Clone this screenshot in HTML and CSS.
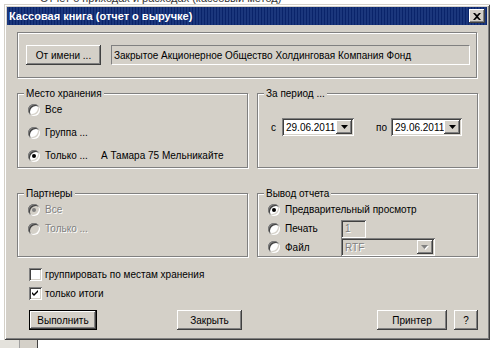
FILE: index.html
```html
<!DOCTYPE html>
<html lang="ru">
<head>
<meta charset="utf-8">
<title>Кассовая книга</title>
<link rel="stylesheet" href="styles.css">
</head>
<body>
<div class="desktop">
  <div class="bg-line"><span class="bg-text">Отчет о приходах и расходах (кассовый метод)</span></div>
  <div class="bg-bottom"><span class="bg-cell-a"></span><span class="bg-cell-b"></span></div>

  <div class="dialog">
    <div class="titlebar">
      <span class="title">Кассовая книга (отчет о выручке)</span>
      <span class="close"><svg width="8" height="7" viewBox="0 0 8 7"><path d="M0 0h2l2 2 2-2h2L5 3.5 8 7H6L4 5 2 7H0l3-3.5z" fill="#000"/></svg></span>
    </div>

    <div class="content">
      <div class="etched top-box">
        <div class="btn btn-from">От имени ...</div>
        <div class="static-field">Закрытое Акционерное Общество Холдинговая Компания Фонд</div>
      </div>

      <div class="row row-2">
        <div class="etched group group-left">
          <span class="group-label">Место хранения</span>
          <div class="list list-storage">
            <div class="opt opt-23"><span class="radio"></span><span>Все</span></div>
            <div class="opt opt-23"><span class="radio"></span><span>Группа ...</span></div>
            <div class="opt opt-23"><span class="radio checked"></span><span class="opt-name">Только ...</span><span>А Тамара 75 Мельникайте</span></div>
          </div>
        </div>
        <div class="etched group group-right">
          <span class="group-label">За период ...</span>
          <div class="period-row">
            <span class="lbl-from">с</span>
            <div class="combo combo-date1"><span class="combo-text">29.06.2011</span><span class="combo-btn"><svg width="7" height="4" viewBox="0 0 7 4"><path d="M0 0h7L3.5 4z" fill="#000"/></svg></span></div>
            <span class="lbl-to">по</span>
            <div class="combo combo-date2"><span class="combo-text">29.06.2011</span><span class="combo-btn"><svg width="7" height="4" viewBox="0 0 7 4"><path d="M0 0h7L3.5 4z" fill="#000"/></svg></span></div>
          </div>
        </div>
      </div>

      <div class="row row-3">
        <div class="etched group group-left">
          <span class="group-label">Партнеры</span>
          <div class="list">
            <div class="opt opt-19 disabled"><span class="radio checked"></span><span>Все</span></div>
            <div class="opt opt-19 disabled"><span class="radio"></span><span>Только ...</span></div>
          </div>
        </div>
        <div class="etched group group-right">
          <span class="group-label">Вывод отчета</span>
          <div class="list">
            <div class="opt opt-19"><span class="radio checked"></span><span>Предварительный просмотр</span></div>
            <div class="opt opt-19"><span class="radio"></span><span class="opt-name">Печать</span><div class="edit-disabled">1</div></div>
            <div class="opt opt-18"><span class="radio"></span><span class="opt-name">Файл</span><div class="combo combo-disabled"><span class="combo-text">RTF</span><span class="combo-btn"><svg width="8" height="5" viewBox="0 0 8 5"><path d="M1 1h7L4.5 5z" fill="#fff"/><path d="M0 0h7L3.5 4z" fill="#808080"/></svg></span></div></div>
          </div>
        </div>
      </div>

      <div class="checks">
        <div class="chk-row"><span class="check"></span><span>группировать по местам хранения</span></div>
        <div class="chk-row"><span class="check"><svg width="7" height="7" viewBox="0 0 7 7"><path d="M0 2L2 4L6 0V2L2 6L0 4Z" fill="#000"/></svg></span><span>только итоги</span></div>
      </div>

      <div class="buttons">
        <div class="btn btn-default btn-run">Выполнить</div>
        <div class="btn btn-close">Закрыть</div>
        <div class="btn btn-printer">Принтер</div>
        <div class="btn btn-help">?</div>
      </div>
    </div>
  </div>
</div>
</body>
</html>
```

FILE: styles.css
```css
* { box-sizing: border-box; }
html, body { margin: 0; padding: 0; }
body {
  width: 494px;
  height: 348px;
  overflow: hidden;
  background: #fff;
  font-family: "Liberation Sans", Arial, sans-serif;
  font-size: 10px;
  color: #000;
}

.desktop {
  position: relative;
  width: 494px;
  height: 348px;
  background: #fff;
  display: flex;
  flex-direction: column;
  justify-content: space-between;
}

.bg-line {
  height: 4px;
  overflow: hidden;
  padding-left: 40px;
}
.bg-text {
  display: block;
  font-size: 11px;
  line-height: 13px;
  margin-top: -8px;
  color: #333;
}

.bg-bottom {
  height: 8px;
  display: flex;
}
.bg-cell-a { width: 20px; background: #e4e2dc; border-right: 1px solid #a0a0a0; }
.bg-cell-b { width: 18px; background: #d4d0c8; border-right: 1px solid #404040; }

/* window */
.dialog {
  position: absolute;
  left: 4px;
  top: 4px;
  width: 486px;
  height: 336px;
  background: #d4d0c8;
  padding: 3px;
  display: flex;
  flex-direction: column;
  box-shadow: inset 1px 1px #d4d0c8, inset -1px -1px #404040, inset 2px 2px #fff, inset -2px -2px #808080;
}

.titlebar {
  height: 18px;
  flex: none;
  background-color: #0a246a;
  background-image: radial-gradient(circle at 1px 1px, rgba(70, 100, 170, 0.45) 0.6px, transparent 0.9px);
  background-size: 3px 2px;
  display: flex;
  align-items: center;
  justify-content: space-between;
  padding: 0 2px;
}
.title {
  color: #fff;
  font-weight: bold;
  font-size: 11px;
}
.close {
  width: 16px;
  height: 14px;
  background: #d4d0c8;
  display: flex;
  align-items: center;
  justify-content: center;
  box-shadow: inset -1px -1px #404040, inset 1px 1px #fff, inset -2px -2px #808080;
}

.content {
  flex: 1;
  display: flex;
  flex-direction: column;
  padding: 7px 9px 7px 10px;
}

.etched {
  border: 1px solid #808080;
  box-shadow: inset 1px 1px #fff, 1px 1px #fff;
}

/* top box */
.top-box {
  height: 46px;
  margin-right: 1px;
  display: flex;
  align-items: center;
  padding-left: 8px;
}
.btn-from { width: 75px; }
.static-field {
  margin-left: 10px;
  width: 359px;
  height: 20px;
  display: flex;
  align-items: center;
  padding-left: 2px;
  border: 1px solid;
  border-color: #808080 #fff #fff #808080;
  white-space: nowrap;
  overflow: hidden;
}

/* group rows */
.row { display: flex; gap: 9px; }
.row-2 { margin-top: 15px; height: 75px; }
.row-3 { margin-top: 25px; height: 64px; }

.group {
  display: flex;
  flex-direction: column;
  align-items: stretch;
}
.group-left { width: 231px; }
.group-right { width: 221px; }

.group-label {
  align-self: flex-start;
  margin-top: -7px;
  margin-left: 6px;
  padding: 0 2px;
  line-height: 13px;
  height: 13px;
  background: #d4d0c8;
}

.list { display: flex; flex-direction: column; padding-left: 10px; }
.list-storage { margin-top: -2px; }

.opt { display: flex; align-items: center; white-space: nowrap; }
.opt-23 { height: 23px; }
.opt-19 { height: 19px; }
.opt-18 { height: 18px; }
.opt .radio { margin-right: 5px; }
.opt-name { width: 56px; flex: none; }

.disabled { color: #808080; text-shadow: 1px 1px #fff; }

.radio {
  width: 12px;
  height: 12px;
  flex: none;
  border-radius: 50%;
  background: #fff;
  display: flex;
  align-items: center;
  justify-content: center;
  box-shadow: inset 1px 1px #808080, inset -1px -1px #fff, inset 2px 2px #404040, inset -2px -2px #d4d0c8;
}
.radio.checked::after {
  content: "";
  width: 4px;
  height: 4px;
  border-radius: 50%;
  background: #000;
}
.disabled .radio { background: #d4d0c8; }
.disabled .radio.checked::after { background: #808080; }

/* period */
.period-row {
  margin-top: 18px;
  height: 18px;
  display: flex;
  align-items: center;
  padding-left: 13px;
  white-space: nowrap;
}
.lbl-from { width: 11px; }
.lbl-to { margin-left: 22px; width: 15px; }

.combo {
  height: 18px;
  background: #fff;
  display: flex;
  align-items: center;
  padding: 2px;
  box-shadow: inset 1px 1px #808080, inset -1px -1px #fff, inset 2px 2px #404040, inset -2px -2px #d4d0c8;
}
.combo-date1 { width: 72px; }
.combo-date2 { width: 71px; }
.combo-text { flex: 1; padding-left: 2px; overflow: hidden; white-space: nowrap; }
.combo-btn {
  width: 16px;
  height: 14px;
  flex: none;
  background: #d4d0c8;
  display: flex;
  align-items: center;
  justify-content: center;
  box-shadow: inset -1px -1px #404040, inset 1px 1px #fff, inset -2px -2px #808080;
}

.edit-disabled {
  width: 25px;
  height: 18px;
  background: #d4d0c8;
  color: #808080;
  text-shadow: 1px 1px #fff;
  padding-left: 4px;
  display: flex;
  align-items: center;
  box-shadow: inset 1px 1px #808080, inset -1px -1px #fff, inset 2px 2px #404040, inset -2px -2px #d4d0c8;
}
.combo-disabled {
  width: 94px;
  background: #d4d0c8;
  color: #808080;
  text-shadow: 1px 1px #fff;
}

/* checkboxes */
.checks { margin-top: 8px; display: flex; flex-direction: column; padding-left: 12px; }
.chk-row { height: 19px; display: flex; align-items: center; gap: 3px; }
.check {
  width: 13px;
  height: 13px;
  flex: none;
  background: #fff;
  display: flex;
  align-items: center;
  justify-content: center;
  box-shadow: inset 1px 1px #808080, inset -1px -1px #fff, inset 2px 2px #404040, inset -2px -2px #d4d0c8;
}

/* buttons */
.buttons {
  margin-top: 7px;
  display: flex;
  padding-left: 12px;
}
.btn {
  height: 20px;
  flex: none;
  display: flex;
  align-items: center;
  justify-content: center;
  background: #d4d0c8;
  white-space: nowrap;
  box-shadow: inset -1px -1px #404040, inset 1px 1px #fff, inset -2px -2px #808080;
}
.btn-default {
  box-shadow: inset 0 0 0 1px #000, inset -2px -2px #404040, inset 2px 2px #fff, inset -3px -3px #808080;
}
.btn-run { width: 68px; }
.btn-close { width: 65px; margin-left: 80px; }
.btn-printer { width: 70px; margin-left: auto; }
.btn-help { width: 24px; margin-left: 7px; }
```
